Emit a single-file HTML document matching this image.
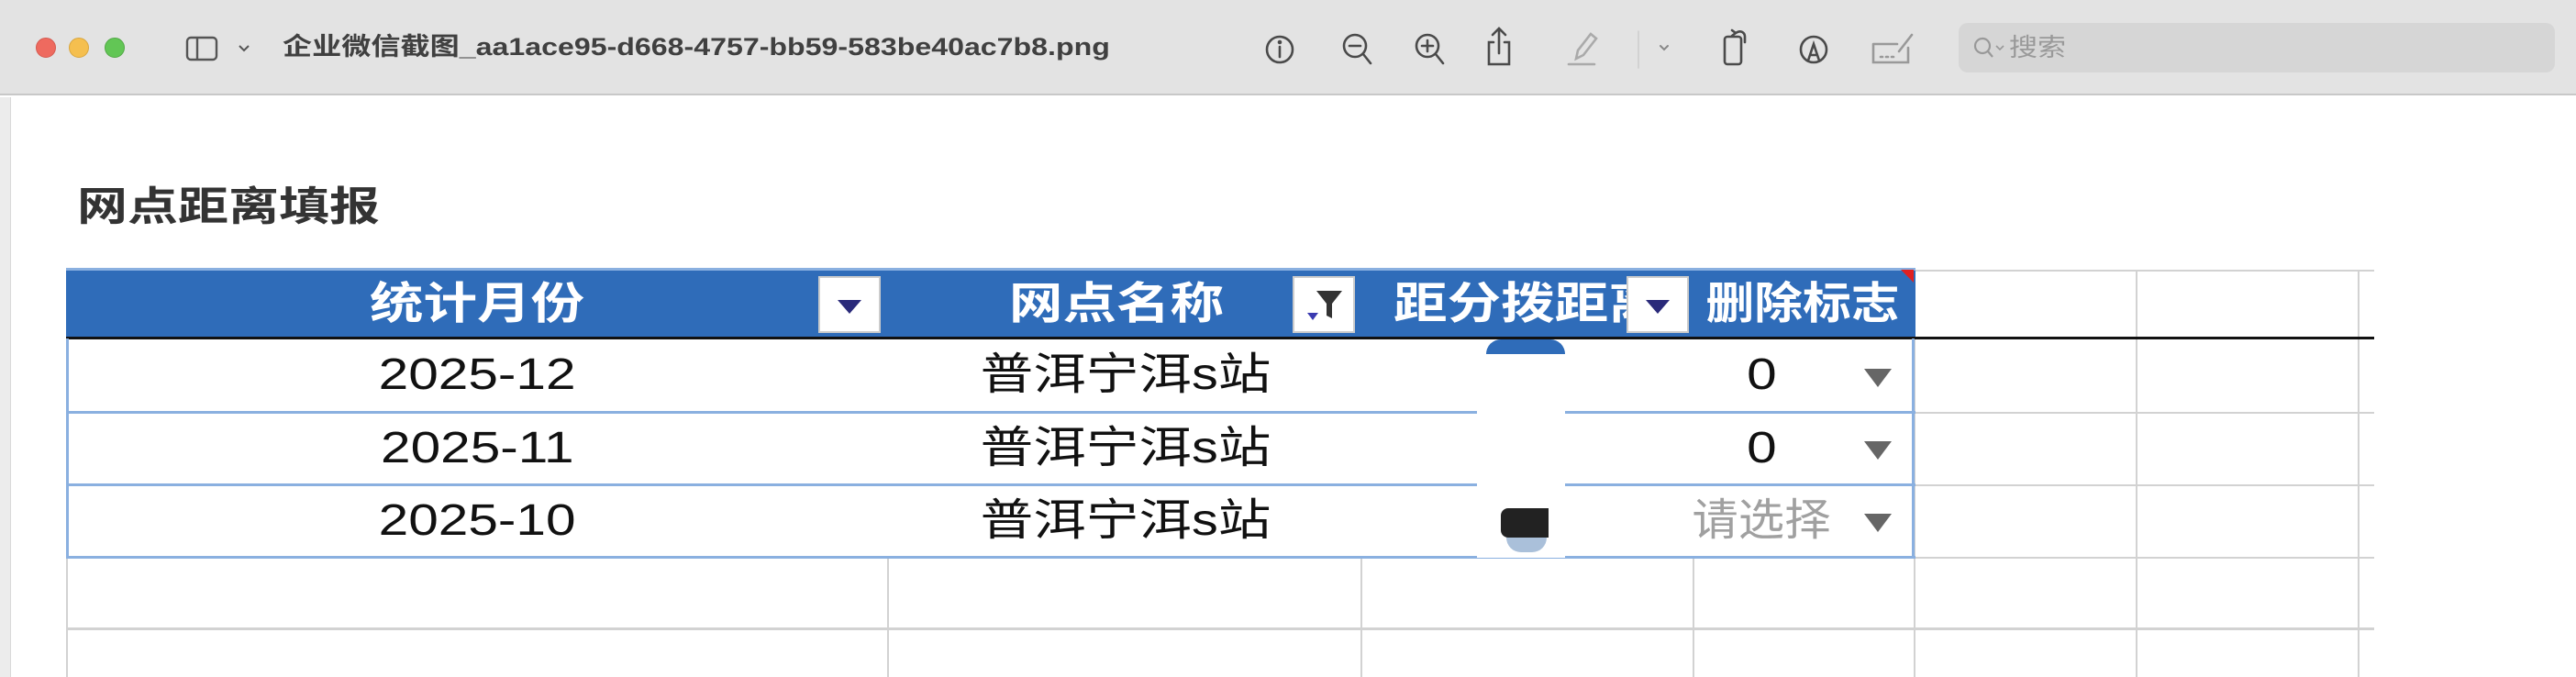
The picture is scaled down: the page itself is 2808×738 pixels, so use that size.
<!DOCTYPE html>
<html><head><meta charset="utf-8"><style>
*{margin:0;padding:0;box-sizing:border-box}
body{width:2808px;height:738px;overflow:hidden;background:#fff;font-family:"Liberation Sans","Noto Sans CJK SC",sans-serif;position:relative}
.a{position:absolute}
.s{display:inline-block;transform:scaleX(1.22)}
.tb{left:0;top:0;width:2808px;height:104px;background:#e3e3e3;border-bottom:2px solid #c8c8c8}
.dot{width:22px;height:22px;border-radius:50%;top:41px}
.hd{color:#fff;font-weight:bold;font-size:48px;top:294px;height:75px;line-height:75px;text-align:center;white-space:nowrap}
.btn{background:#fff;border:2px solid #ccc;width:68px;height:62px;top:301px}
.cell{font-size:48px;color:#111;text-align:center;height:79px;line-height:79px;white-space:nowrap}
.tri{width:0;height:0;border-left:15px solid transparent;border-right:15px solid transparent;border-top:20px solid #666}
.hl{height:3px;background:#8ab0e0;left:72px;width:2016px}
.gl{background:#d2d2d2}
</style></head><body>
<div class="a tb"></div>
<div class="a dot" style="left:39px;background:#ee6a5f;border:1px solid #d45a50"></div>
<div class="a dot" style="left:75px;background:#f5bf4f;border:1px solid #d9a63f"></div>
<div class="a dot" style="left:114px;background:#62c655;border:1px solid #52a846"></div>
<svg class="a" style="left:202px;top:38px" width="80" height="30" viewBox="0 0 80 30" fill="none" stroke="#555" stroke-width="2.4"><rect x="2" y="3" width="32" height="24" rx="4"/><line x1="13" y1="3" x2="13" y2="27"/><path d="M59 12l5 5 5-5" stroke-width="2"/></svg>
<div class="a" style="left:308px;top:34px;font-size:27px;font-weight:bold;color:#404040;line-height:34px;transform:scaleX(1.19);transform-origin:left">企业微信截图_aa1ace95-d668-4757-bb59-583be40ac7b8.png</div>
<svg class="a" style="left:1370px;top:26px" width="780" height="56" viewBox="0 0 780 56" fill="none" stroke="#4a4a4a" stroke-width="2.6" stroke-linecap="round">
<circle cx="25" cy="28" r="14"/><line x1="25" y1="25" x2="25" y2="36"/><circle cx="25" cy="20" r="1" fill="#4a4a4a"/>
<circle cx="107" cy="24" r="12"/><line x1="101" y1="24" x2="113" y2="24"/><line x1="116" y1="33" x2="124" y2="43"/>
<circle cx="186" cy="24" r="12"/><line x1="180" y1="24" x2="192" y2="24"/><line x1="186" y1="18" x2="186" y2="30"/><line x1="195" y1="33" x2="203" y2="43"/>
<path d="M258 20h-5v24h22v-24h-5M264 32v-26M257 12l7-7 7 7"/>
<g stroke="#aaa"><path d="M348 38l2-9 14-18 6 5-14 18z"/><line x1="340" y1="44" x2="368" y2="44"/></g>
<line x1="416" y1="8" x2="416" y2="48" stroke="#ccc" stroke-width="1.5"/>
<path d="M440 24l4 4 4-4" stroke="#888" stroke-width="2"/>
<rect x="510" y="14" width="18" height="30" rx="3"/><path d="M522 10c6-4 10 0 10 4v6M518 7l4 3-4 3"/>
<circle cx="607" cy="28" r="14"/><path d="M601 40l6-18 6 18M603 34h8"/>
<g stroke="#999"><path d="M672 22v20h38v-16M672 22h26M700 30l14-18"/><path d="M680 36h2M686 36h2M692 36h2"/></g>
</svg>
<div class="a" style="left:2135px;top:25px;width:650px;height:54px;background:#d6d6d6;border-radius:10px"></div>
<svg class="a" style="left:2150px;top:38px" width="40" height="30" fill="none" stroke="#999" stroke-width="2.2"><circle cx="11" cy="12" r="8"/><line x1="17" y1="18" x2="22" y2="24"/><path d="M26 12l4 4 4-4" stroke-width="1.6"/></svg>
<div class="a" style="left:2190px;top:36px;font-size:27px;color:#999;line-height:32px;transform:scaleX(1.15);transform-origin:left">搜索</div>
<div class="a" style="left:0;top:106px;width:12px;height:632px;background:#ececec;border-right:1px solid #d8d8d8"></div>
<div class="a" style="left:84px;top:198px;font-size:44px;font-weight:bold;color:#333;line-height:56px;transform:scaleX(1.25);transform-origin:left">网点距离填报</div>
<!-- grid -->
<div class="a gl" style="left:2086px;top:294px;width:2px;height:444px"></div>
<div class="a gl" style="left:2328px;top:294px;width:2px;height:444px"></div>
<div class="a gl" style="left:2570px;top:294px;width:2px;height:444px"></div>
<div class="a gl" style="left:2088px;top:294px;width:500px;height:2px"></div>
<div class="a gl" style="left:2088px;top:449px;width:500px;height:2px"></div>
<div class="a gl" style="left:2088px;top:528px;width:500px;height:2px"></div>
<div class="a gl" style="left:2088px;top:607px;width:500px;height:2px"></div>
<div class="a gl" style="left:72px;top:684px;width:2516px;height:3px"></div>
<div class="a gl" style="left:72px;top:607px;width:2px;height:131px"></div>
<div class="a gl" style="left:967px;top:607px;width:2px;height:131px"></div>
<div class="a gl" style="left:1483px;top:607px;width:2px;height:131px"></div>
<div class="a gl" style="left:1845px;top:607px;width:2px;height:131px"></div>
<!-- header -->
<div class="a" style="left:72px;top:292px;width:2016px;height:77px;background:#2f6cb9;border-top:3px solid #8ab0e0"></div>
<div class="a" style="left:72px;top:367px;width:2516px;height:3px;background:#111"></div>
<div class="a hd" style="left:120px;width:800px"><span class="s">统计月份</span></div>
<div class="a hd" style="left:967px;width:500px"><span class="s">网点名称</span></div>
<div class="a hd" style="left:1519px;width:254px;overflow:hidden;text-align:left"><span class="s" style="transform-origin:left">距分拨距离</span></div>
<div class="a hd" style="left:1845px;width:241px"><span class="s" style="transform:scaleX(1.1)">删除标志</span></div>
<div class="a btn" style="left:892px"><div class="a" style="left:19px;top:24px;border-left:13px solid transparent;border-right:13px solid transparent;border-top:15px solid #2a2a7a"></div></div>
<div class="a btn" style="left:1409px"><svg class="a" style="left:10px;top:10px" width="46" height="40"><path d="M14 4h28l-11 14v16l-6-3v-13z" fill="#333"/><path d="M4 28h12l-6 8z" fill="#3a3ab0"/></svg></div>
<div class="a btn" style="left:1773px"><div class="a" style="left:19px;top:24px;border-left:13px solid transparent;border-right:13px solid transparent;border-top:15px solid #2a2a7a"></div></div>
<div class="a" style="left:2072px;top:294px;border-left:14px solid transparent;border-top:14px solid #e02020"></div>
<!-- rows -->
<div class="a" style="left:72px;top:369px;width:3px;height:239px;background:#8ab0e0"></div>
<div class="a" style="left:2084px;top:369px;width:3px;height:239px;background:#8ab0e0"></div>
<div class="a hl" style="top:448px"></div>
<div class="a hl" style="top:527px"></div>
<div class="a hl" style="top:606px"></div>
<div class="a cell" style="left:120px;top:369px;width:800px"><span class="s">2025-12</span></div>
<div class="a cell" style="left:120px;top:449px;width:800px"><span class="s">2025-11</span></div>
<div class="a cell" style="left:120px;top:528px;width:800px"><span class="s">2025-10</span></div>
<div class="a cell" style="left:967px;top:369px;width:520px"><span class="s" style="transform:scaleX(1.2)">普洱宁洱s站</span></div>
<div class="a cell" style="left:967px;top:449px;width:520px"><span class="s" style="transform:scaleX(1.2)">普洱宁洱s站</span></div>
<div class="a cell" style="left:967px;top:528px;width:520px"><span class="s" style="transform:scaleX(1.2)">普洱宁洱s站</span></div>
<div class="a cell" style="left:1880px;top:369px;width:80px"><span class="s">0</span></div>
<div class="a cell" style="left:1880px;top:449px;width:80px"><span class="s">0</span></div>
<div class="a cell" style="left:1830px;top:528px;width:180px;color:#a0a0a0"><span class="s" style="transform:scaleX(1.05)">请选择</span></div>
<div class="a tri" style="left:2032px;top:402px"></div>
<div class="a tri" style="left:2032px;top:481px"></div>
<div class="a tri" style="left:2032px;top:560px"></div>
<!-- blurred patch -->
<div class="a" style="left:1610px;top:370px;width:96px;height:238px;background:#fff"></div>
<div class="a" style="left:1620px;top:370px;width:86px;height:16px;background:#2f6cb9;border-radius:20px 20px 0 0"></div>
<div class="a" style="left:1636px;top:554px;width:52px;height:32px;background:#222;border-radius:8px 0 0 8px"></div>
<div class="a" style="left:1642px;top:586px;width:44px;height:16px;background:#aac0da;border-radius:0 0 22px 22px"></div>
</body></html>
